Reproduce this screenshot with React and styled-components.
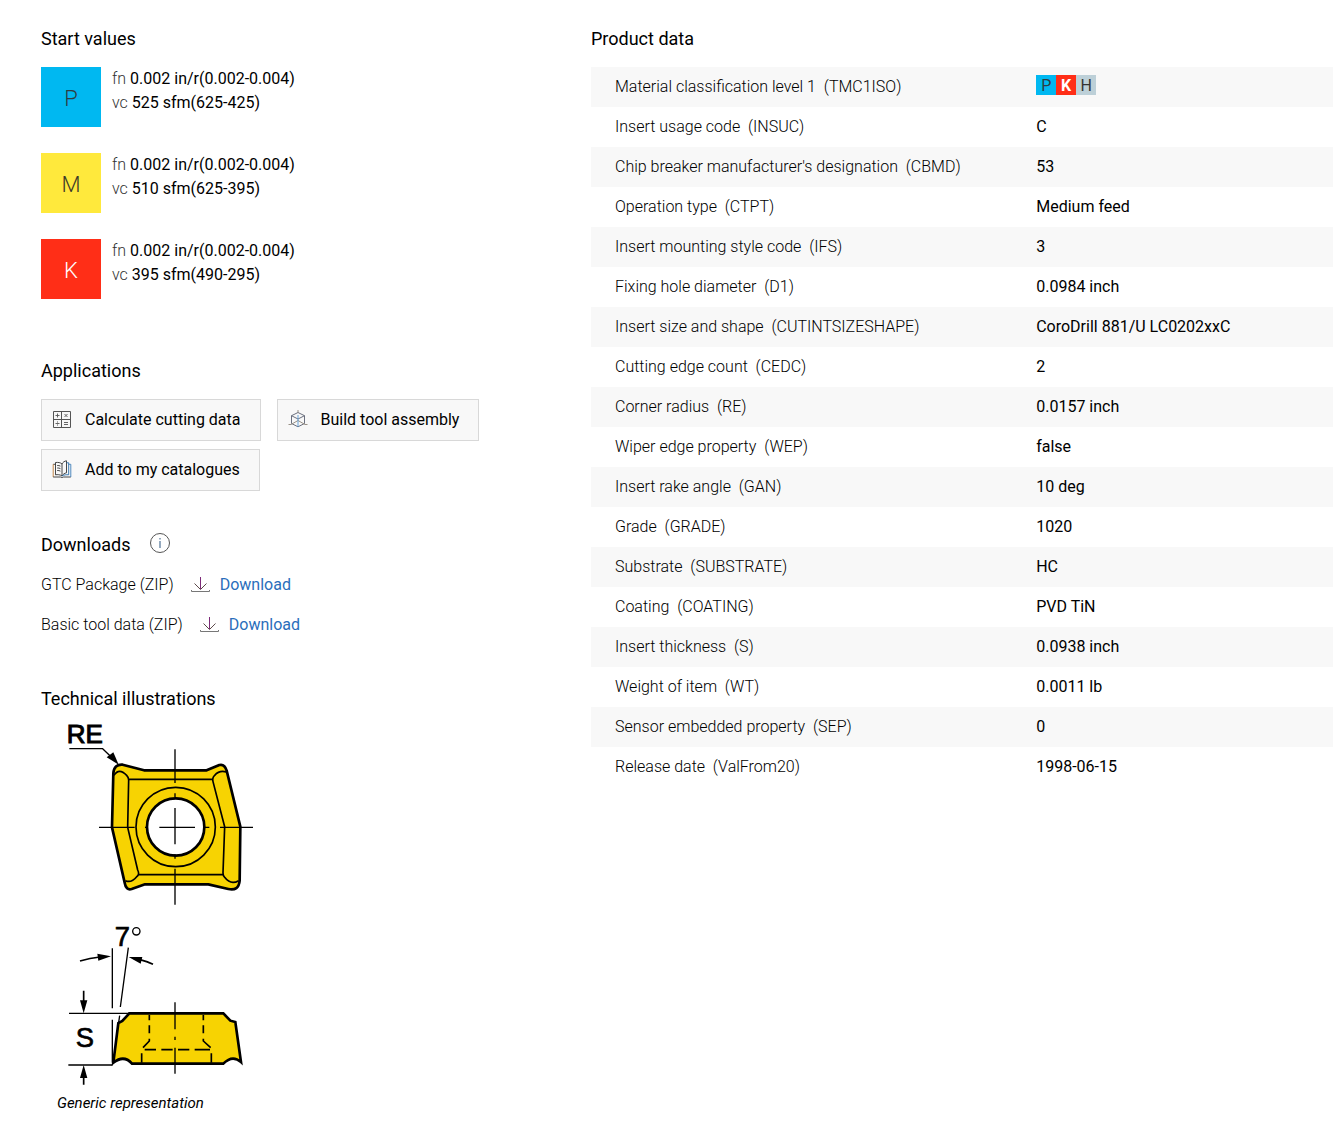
import React from "react";
import styled, { createGlobalStyle } from "styled-components";

const GlobalStyle = createGlobalStyle`
  * { box-sizing: border-box; }
  body {
    margin: 0;
    background: #fff;
    color: #000;
    font-family: Roboto, "Liberation Sans", sans-serif;
    font-size: 16px;
    line-height: 24px;
  }
`;

const Page = styled.main`
  display: grid;
  grid-template-columns: minmax(0, 509fr) minmax(0, 742fr);
  column-gap: 41px;
  align-items: start;
  padding: 27px 0 13px 41px;
`;

const Column = styled.div`
  display: flex;
  flex-direction: column;
  gap: 42px;
`;

const Section = styled.section`
  display: flex;
  flex-direction: column;
  gap: ${(p) => p.$gap ?? 16}px;
`;

const Heading = styled.h2`
  margin: 0;
  font-size: 18px;
  line-height: 24px;
  font-weight: 400;
`;

const HeadingRow = styled.div`
  display: flex;
  gap: 20px;
`;

const InfoButton = styled.button`
  display: block;
  width: 20px;
  height: 20px;
  padding: 0;
  border: 0;
  background: none;
`;

const StartList = styled.ul`
  display: flex;
  flex-direction: column;
  gap: 26px;
  margin: 0;
  padding: 0 0 18px;
  list-style: none;
`;

const StartItem = styled.li`
  display: flex;
  gap: 11px;
`;

const materials = {
  P: { background: "#00b8f1", color: "#2f3c42" },
  M: { background: "#ffe93c", color: "#3c3a28" },
  K: { background: "#ff2e17", color: "#ffffff" },
  H: { background: "#bdd0d8", color: "#333333" },
};

const Swatch = styled.div`
  display: flex;
  align-items: center;
  justify-content: center;
  width: 60px;
  height: 60px;
  padding-top: 3px;
  background: ${(p) => materials[p.$iso].background};
  color: ${(p) => materials[p.$iso].color};
  font-size: 22px;
  font-weight: 300;
`;

const Line = styled.div`
  font-weight: 400;
`;

const Symbol = styled.span`
  font-weight: 300;
  color: #333;
`;

const Buttons = styled.div`
  display: flex;
  flex-wrap: wrap;
  gap: 8px 16px;
`;

const AppButton = styled.button`
  display: flex;
  align-items: center;
  gap: 13px;
  height: 42px;
  padding: 0 19px 0 10px;
  border: 1px solid #d8d8d8;
  background: #f8f8f8;
  color: #000;
  font: inherit;
`;

const Downloads = styled.ul`
  margin: 0;
  padding: 0;
  list-style: none;
`;

const DownloadRow = styled.li`
  display: flex;
  align-items: center;
  gap: 16px;
  height: 40px;
  font-weight: 300;
`;

const DownloadLink = styled.a`
  display: flex;
  align-items: center;
  gap: 10px;
  color: #2a6ebb;
  font-weight: 400;
  text-decoration: none;
`;

const Figure = styled.figure`
  margin: 0;
  padding-left: 16px;
`;

const Drawing = styled.svg`
  display: block;
  width: 200px;
  height: 380px;
  font-family: "Liberation Sans", sans-serif;
`;

const Caption = styled.figcaption`
  font-size: 15px;
  font-style: italic;
`;

const Table = styled.table`
  width: 100%;
  table-layout: fixed;
  border-collapse: collapse;
`;

const Row = styled.tr`
  height: 40px;
  &:nth-child(odd) { background: #f8f8f8; }
`;

const Label = styled.th`
  width: 60%;
  padding: 8px 0 8px 24px;
  font-weight: 300;
  text-align: left;
  vertical-align: top;
  white-space: pre-wrap;
`;

const Value = styled.td`
  padding: 8px 0;
  vertical-align: top;
`;

const Tags = styled.div`
  display: flex;
`;

const Tag = styled.span`
  width: 20px;
  height: 20px;
  background: ${(p) => materials[p.$iso].background};
  color: ${(p) => materials[p.$iso].color};
  font-weight: ${(p) => (p.$iso === "K" ? 700 : 400)};
  line-height: 22px;
  text-align: center;
`;

const CalculatorIcon = () => (
  <svg width="20" height="20" viewBox="0 0 20 20" fill="none" stroke="#555" aria-hidden="true">
    <path d="M1.5 1.5h17v16h-17zM9.500 1.5v16M1.5 9.500h17" />
    <path d="M3.500 5.500h4M5.500 3.500v4M12.500 4l3 3M15.500 4l-3 3M3.500 13.500h4M12 12.500h4M12 14.500h4" strokeWidth="0.9" />
    <path d="M5.500 11.500v1M5.500 14.500v1" />
  </svg>
);

const CubeIcon = () => (
  <svg width="20" height="20" viewBox="0 0 20 20" fill="none" stroke="#5a6070" strokeWidth="0.9" aria-hidden="true">
    <path d="M10 2.500l6.500 3.200v7.800L10 16.800l-6.500-3.300V5.700zM3.500 5.700L10 9l6.500-3.300" />
    <path d="M10 0v2.500M.5 14.500h2.500l7-4 7 4h2.500" stroke="#8d8578" />
    <path d="M10 5v12" stroke="#5b9bd5" />
  </svg>
);

const BookIcon = () => (
  <svg width="20" height="20" viewBox="0 0 20 20" fill="none" stroke="#333" strokeWidth="0.9" aria-hidden="true">
    <path d="M10 16C8 14.500 5.500 14.500 3.500 14.800V2.500C6 2.200 8.500 2.500 10 4z" />
    <path d="M10 4c.8-1.700 2.500-3 4.500-3.200v12C12.500 13 11 14.500 10 16" />
    <path d="M14.500 2.800h2.200v12c-2.500-.2-4.700 0-6.700 1.200" stroke="#256aa8" />
    <path d="M3.500 4.300H1.200" />
    <path d="M1.200 4.300v12.700" stroke="#c07a35" />
    <path d="M1.200 17h7.300c.8.700 2.200.7 3 0h7.300" />
    <path d="M18.800 17V4.300h-2.100" stroke="#3c7db8" />
    <path d="M5.200 5.500c1.200-.1 2.300.1 3.200.6M5.200 8c1.200-.1 2.300.1 3.200.6M5.200 10.500c1.200-.1 2.300.1 3.200.6" />
  </svg>
);

const DownloadIcon = () => (
  <svg width="20" height="20" viewBox="0 0 20 20" fill="none" aria-hidden="true">
    <path d="M10.500 2v12" stroke="#7d2a78" />
    <path d="M4.500 8.500l6 6 6-6" stroke="#5d4a4a" />
    <path d="M1.500 15v1.500h18V15" stroke="#777" />
  </svg>
);

const InfoIcon = () => (
  <svg width="20" height="20" viewBox="0 0 20 20" fill="none" stroke="#555" aria-hidden="true">
    <circle cx="10" cy="10" r="9.500" />
    <path d="M10 8v7M10 5v1.500" stroke="#4f7296" strokeWidth="1.200" />
  </svg>
);

const InsertDrawing = () => (
  <Drawing viewBox="21 3 600 1140" role="img" aria-label="Insert dimensions RE, 7° and S">
    <g fill="none" stroke="#000" strokeWidth="5" strokeLinejoin="round">
      <path
        d="M190 190Q192 162 218 164L282 181H470L508 165Q524 161 530 182L571 350L569 512Q566 544 535 537L475 523H285L245 537Q228 542 224 518L186 352Z"
        fill="#f7d302"
        strokeWidth="8"
      />
      <path d="M192 196Q207 172 230 196Q236 202 236 210L233 352L263 480Q270 494 260 500Q244 520 226 512M236 208H488M529 186Q508 180 494 196Q486 203 489 215L524 350L519 488Q519 498 524 502Q542 526 566 512M519 494H266" />
      <circle cx="377" cy="351" r="119" />
      <circle cx="377" cy="351" r="86" fill="#fff" strokeWidth="8" />
      <path d="M375 118V219M375 250V262M375 294V403M375 432V446M375 476V584M147 352H254M285 352H293M328 352H435M463 352H478M510 352H609" strokeWidth="4" />
      <path d="M58 116H158L190 147" strokeWidth="4" />
      <path d="M206 164L170 142L190 127Z" fill="#000" stroke="none" />
    </g>
    <text x="50" y="99" fontSize="78" stroke="#000" strokeWidth="3">RE</text>

    <g transform="translate(0 615)" fill="none" stroke="#000" strokeWidth="4">
      <path
        d="M238 295H520L541 317L556 321L573 441Q547 418 520 446H246Q222 418 190 443L205 324L217 318Z"
        fill="#f7d302"
        strokeWidth="8"
      />
      <path d="M187 100V280M187 314V443M235 98L211 276M209 302L206 322M57 295H238M55 450H188" />
      <path d="M298 300V316M298 331V355M298 371V378L279 398M275 415V443M460 300V316M460 331V355M460 371V378L482 398M484 415V443M284 404H318M334 404H368M384 404H418M434 404H480" strokeWidth="5" />
      <path d="M375 262V343M375 365V375M375 398V476" />
      <path d="M90 138Q120 129 150 126M270 134Q290 139 309 148M101 227V262M101 480V509" strokeWidth="5" />
      <path d="M183 124L142 116L145 137ZM236 126L277 126L272 146ZM101 295L90 256H112ZM101 450L90 489H112Z" fill="#000" stroke="none" />
      <circle cx="259" cy="49" r="11" />
    </g>
    <g stroke="#000" strokeWidth="2">
      <text x="194" y="709" fontSize="82">7</text>
      <text x="77" y="1011" fontSize="82">S</text>
    </g>
  </Drawing>
);

const startValues = [
  { iso: "P", fn: "0.002 in/r(0.002-0.004)", vc: "525 sfm(625-425)" },
  { iso: "M", fn: "0.002 in/r(0.002-0.004)", vc: "510 sfm(625-395)" },
  { iso: "K", fn: "0.002 in/r(0.002-0.004)", vc: "395 sfm(490-295)" },
];

const productData = [
  ["Material classification level 1", "TMC1ISO", null],
  ["Insert usage code", "INSUC", "C"],
  ["Chip breaker manufacturer's designation", "CBMD", "53"],
  ["Operation type", "CTPT", "Medium feed"],
  ["Insert mounting style code", "IFS", "3"],
  ["Fixing hole diameter", "D1", "0.0984 inch"],
  ["Insert size and shape", "CUTINTSIZESHAPE", "CoroDrill 881/U LC0202xxC"],
  ["Cutting edge count", "CEDC", "2"],
  ["Corner radius", "RE", "0.0157 inch"],
  ["Wiper edge property", "WEP", "false"],
  ["Insert rake angle", "GAN", "10 deg"],
  ["Grade", "GRADE", "1020"],
  ["Substrate", "SUBSTRATE", "HC"],
  ["Coating", "COATING", "PVD TiN"],
  ["Insert thickness", "S", "0.0938 inch"],
  ["Weight of item", "WT", "0.0011 lb"],
  ["Sensor embedded property", "SEP", "0"],
  ["Release date", "ValFrom20", "1998-06-15"],
];

export default function App() {
  return (
    <>
      <GlobalStyle />
      <Page>
        <Column>
          <Section>
            <Heading>Start values</Heading>
            <StartList>
              {startValues.map((v) => (
                <StartItem key={v.iso}>
                  <Swatch $iso={v.iso}>{v.iso}</Swatch>
                  <div>
                    <Line><Symbol>fn</Symbol> {v.fn}</Line>
                    <Line><Symbol>vc</Symbol> {v.vc}</Line>
                  </div>
                </StartItem>
              ))}
            </StartList>
          </Section>

          <Section>
            <Heading>Applications</Heading>
            <Buttons>
              <AppButton type="button"><CalculatorIcon />Calculate cutting data</AppButton>
              <AppButton type="button"><CubeIcon />Build tool assembly</AppButton>
              <AppButton type="button"><BookIcon />Add to my catalogues</AppButton>
            </Buttons>
          </Section>

          <Section $gap={8}>
            <HeadingRow>
              <Heading>Downloads</Heading>
              <InfoButton type="button" aria-label="About downloads"><InfoIcon /></InfoButton>
            </HeadingRow>
            <Downloads>
              {["GTC Package (ZIP)", "Basic tool data (ZIP)"].map((name) => (
                <DownloadRow key={name}>
                  {name}
                  <DownloadLink href="#"><DownloadIcon />Download</DownloadLink>
                </DownloadRow>
              ))}
            </Downloads>
          </Section>

          <Section $gap={0}>
            <Heading>Technical illustrations</Heading>
            <Figure>
              <InsertDrawing />
              <Caption>Generic representation</Caption>
            </Figure>
          </Section>
        </Column>

        <Section>
          <Heading>Product data</Heading>
          <Table>
            <tbody>
              {productData.map(([name, code, value]) => (
                <Row key={code}>
                  <Label scope="row">{`${name}  (${code})`}</Label>
                  <Value>
                    {value ?? (
                      <Tags>
                        {["P", "K", "H"].map((iso) => <Tag key={iso} $iso={iso}>{iso}</Tag>)}
                      </Tags>
                    )}
                  </Value>
                </Row>
              ))}
            </tbody>
          </Table>
        </Section>
      </Page>
    </>
  );
}
